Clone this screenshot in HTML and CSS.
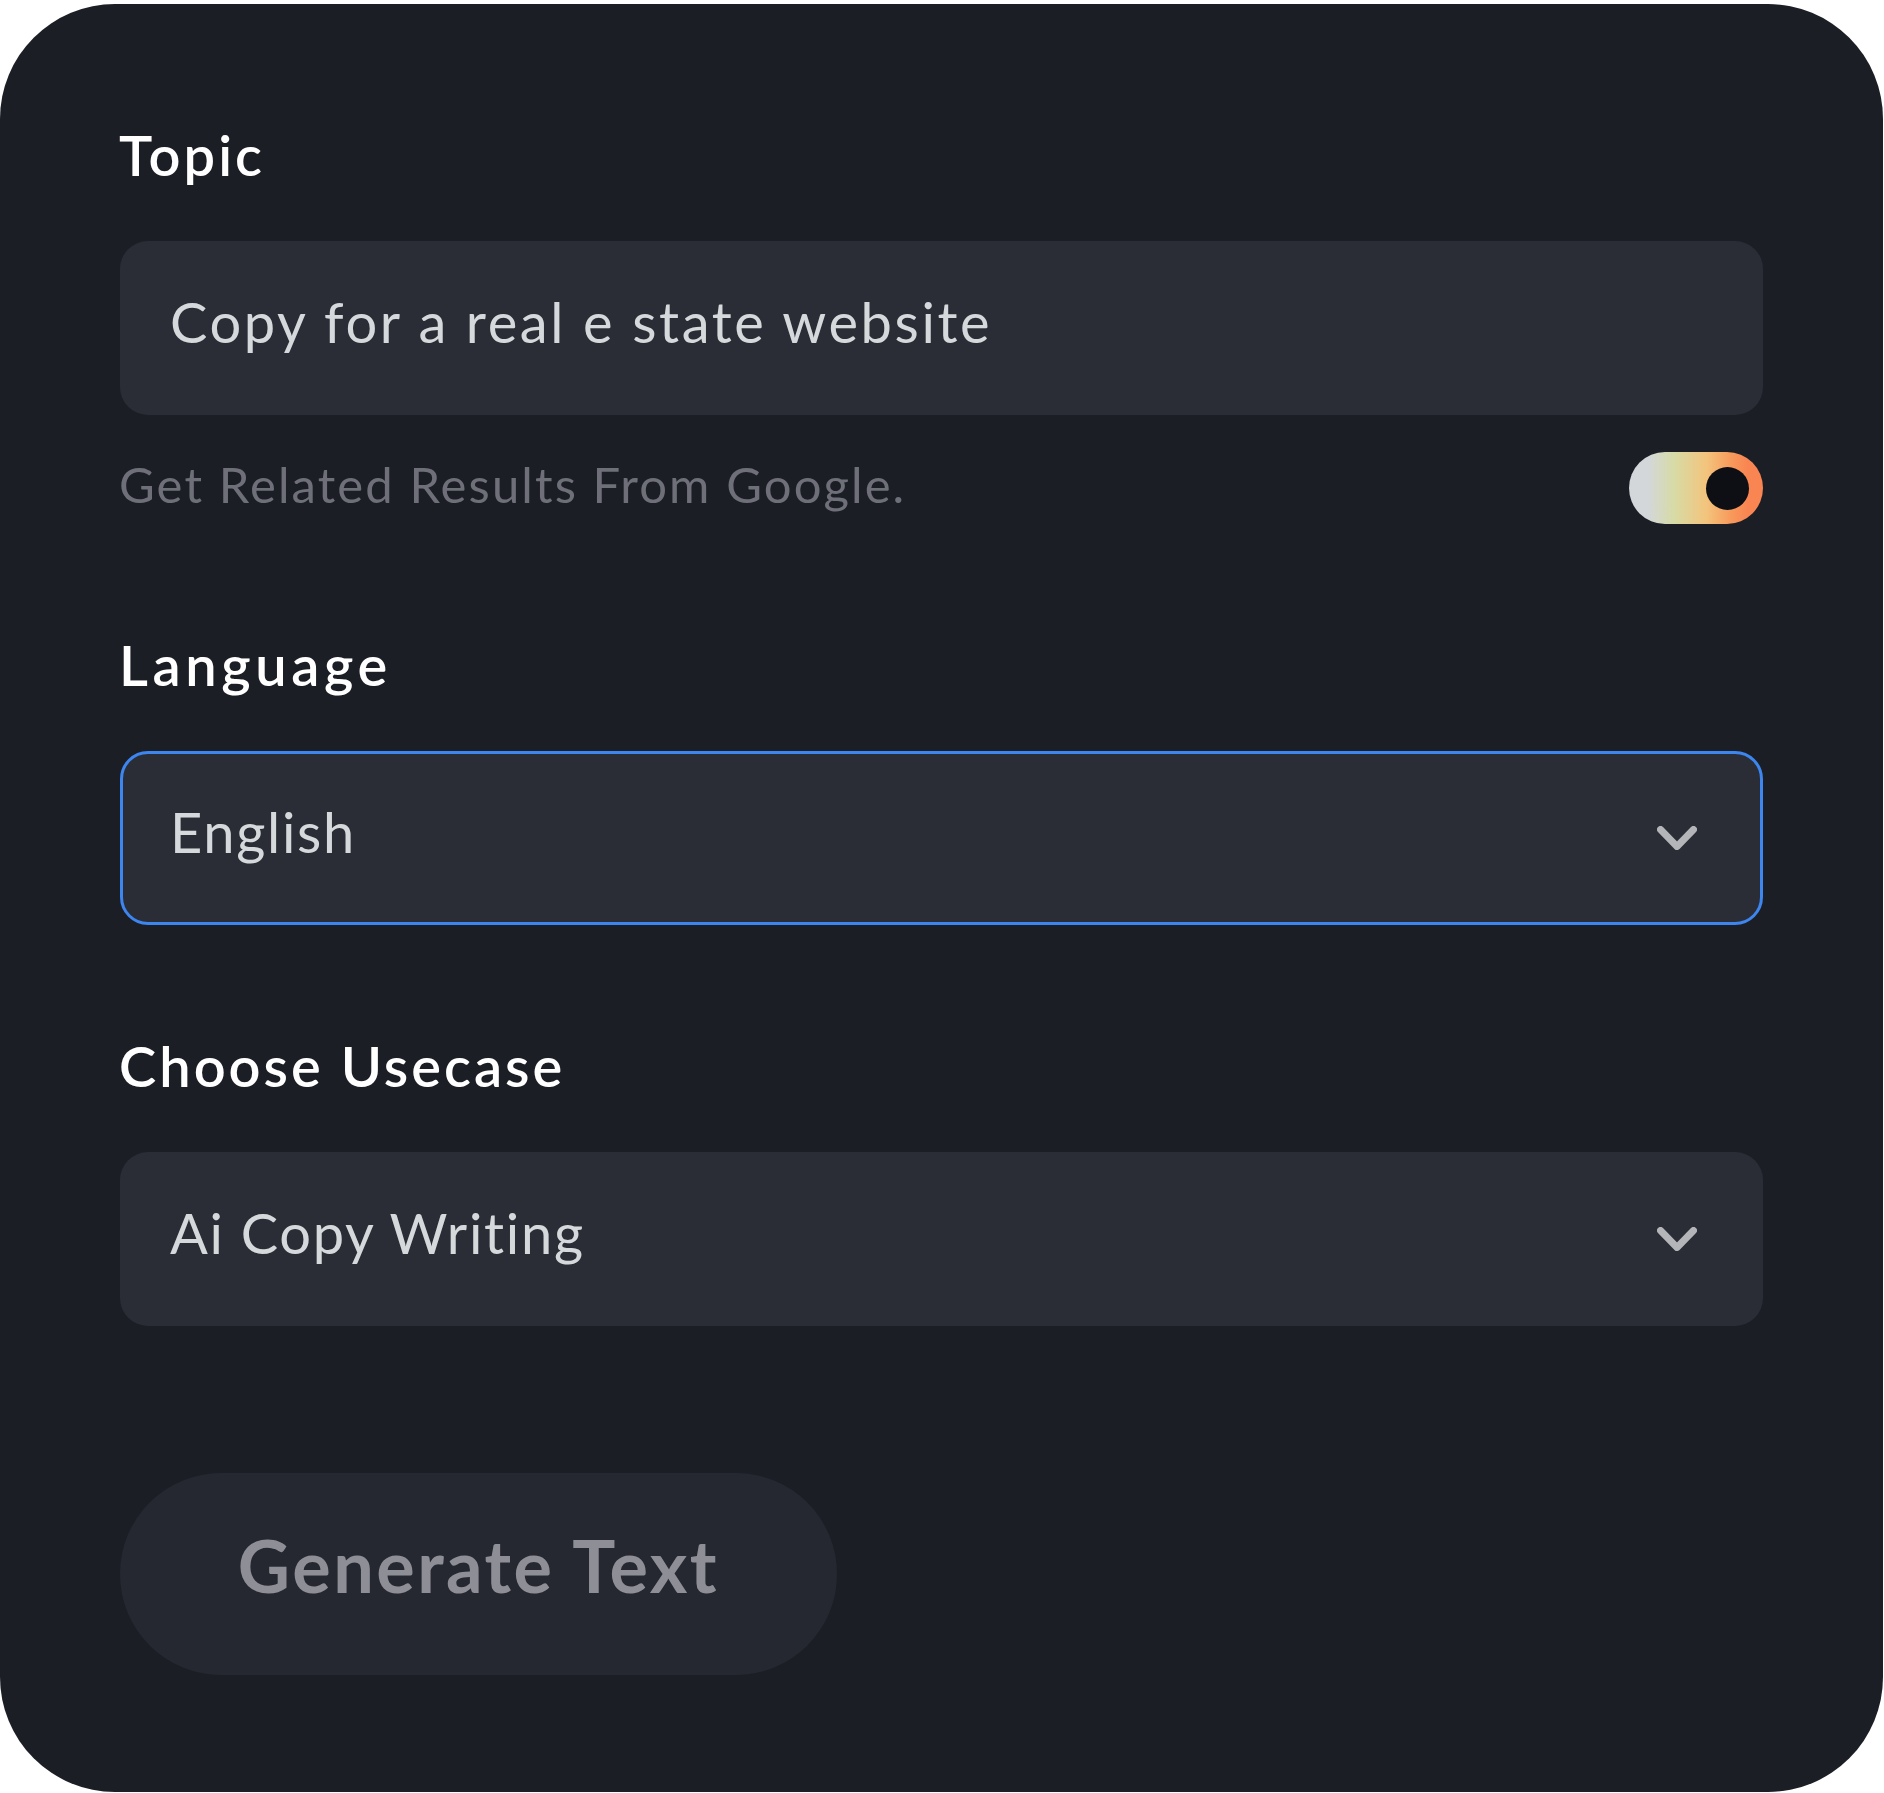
FILE: index.html
```html
<!DOCTYPE html>
<html lang="en">
<head>
<meta charset="utf-8">
<title>Generate Text</title>
<link rel="stylesheet" href="styles.css">
</head>
<body>
<div class="card">
  <div class="label label-topic">Topic</div>
  <div class="field field-input">
    <span class="value value-wide">Copy for a real e state website</span>
  </div>
  <div class="help-row">
    <span class="help">Get Related Results From Google.</span>
    <span class="toggle"><span class="knob"></span></span>
  </div>

  <div class="label label-section label-language">Language</div>
  <div class="field field-select is-focused">
    <span class="value">English</span>
    <svg class="chevron" viewBox="0 0 40 24" width="40" height="24"><path d="M3.5 3.5 L20 20.5 L36.5 3.5" fill="none" stroke="#b3b5b9" stroke-width="7" stroke-linecap="round" stroke-linejoin="round"/></svg>
  </div>

  <div class="label label-section">Choose Usecase</div>
  <div class="field field-select">
    <span class="value">Ai Copy Writing</span>
    <svg class="chevron" viewBox="0 0 40 24" width="40" height="24"><path d="M3.5 3.5 L20 20.5 L36.5 3.5" fill="none" stroke="#b3b5b9" stroke-width="7" stroke-linecap="round" stroke-linejoin="round"/></svg>
  </div>

  <button class="generate" type="button">Generate Text</button>
</div>
</body>
</html>
```

FILE: styles.css
```css
html, body {
  margin: 0;
  padding: 0;
  background: #ffffff;
}

body {
  font-family: "Lato", "Noto Sans", sans-serif;
  padding-top: 4px;
}

.card {
  box-sizing: border-box;
  width: 1883px;
  height: 1788px;
  background: #1c1e26;
  border-radius: 115px;
  padding: 123px 120px 117px 120px;
  display: flex;
  flex-direction: column;
  align-items: stretch;
}

.label {
  color: #ffffff;
  font-size: 56px;
  line-height: 56px;
  font-weight: 600;
  letter-spacing: 3px;
  margin-left: -1px;
}

.label-language {
  letter-spacing: 4.6px;
}

.label-section {
  margin-top: 113px;
}

.field {
  box-sizing: border-box;
  margin-top: 58px;
  height: 174px;
  border-radius: 28px;
  background: #2a2d36;
  display: flex;
  align-items: center;
  padding: 0 63px 12px 47px;
  border: 3px solid transparent;
}

.field.is-focused {
  border-color: #3d86ef;
}

.field .value {
  color: #d6d9db;
  font-size: 56px;
  line-height: 56px;
  font-weight: 400;
  letter-spacing: 1.7px;
  flex: 1;
}

.field .value-wide {
  letter-spacing: 2.6px;
}

.chevron {
  flex: none;
  display: block;
  margin-top: 12px;
}

.help-row {
  margin-top: 37px;
  height: 72px;
  display: flex;
  align-items: center;
  justify-content: space-between;
}

.help {
  color: #6e6f78;
  font-size: 49px;
  line-height: 49px;
  letter-spacing: 2.1px;
  padding-bottom: 8px;
  margin-left: -1px;
}

.toggle {
  position: relative;
  width: 134px;
  height: 72px;
  border-radius: 36px;
  background: linear-gradient(90deg, #d3d7da 0%, #d3d7da 14%, #d7dba5 34%, #f3c47c 58%, #f89a5c 76%, #f98652 88%, #f98652 100%);
}

.knob {
  position: absolute;
  right: 14px;
  top: 15px;
  width: 43px;
  height: 43px;
  border-radius: 50%;
  background: #0d0f14;
}

.generate {
  margin-top: 147px;
  width: 717px;
  height: 202px;
  border: none;
  border-radius: 101px;
  background: #262831;
  color: #8e8f96;
  font-family: "Lato", "Noto Sans", sans-serif;
  font-size: 72px;
  line-height: 72px;
  font-weight: 700;
  letter-spacing: 2.5px;
  padding: 0 0 18px 0;
  align-self: flex-start;
}
```
